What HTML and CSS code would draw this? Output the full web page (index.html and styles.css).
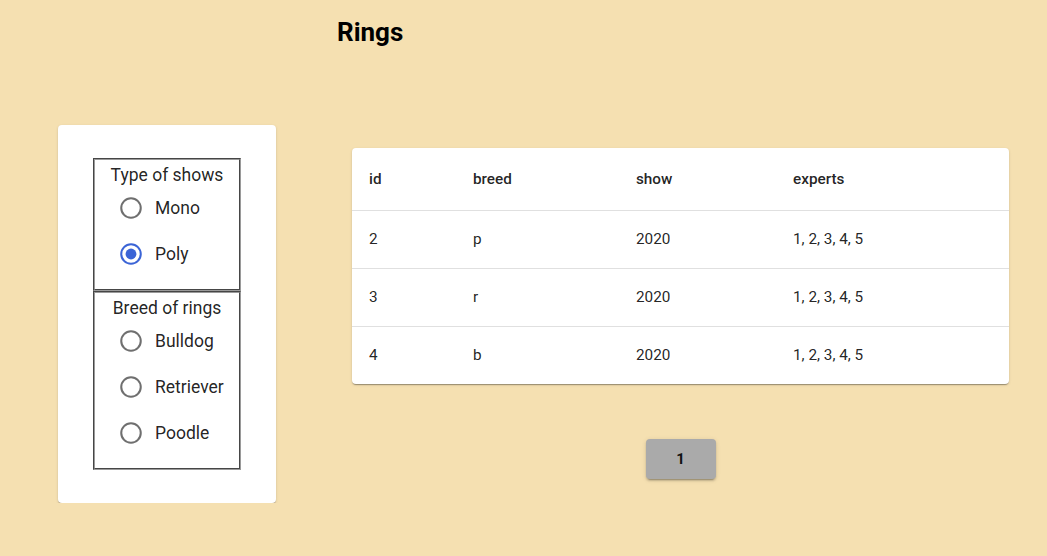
FILE: index.html
```html
<!DOCTYPE html>
<html lang="en">
<head>
	<meta charset="UTF-8">
	<title>Rings</title>
	<link rel="stylesheet" href="styles.css">
</head>
<body>
	<h2 class="title">Rings</h2>
	<div class="main">
		<aside class="filters">
			<div class="group">
				<div class="group-title">Type of shows</div>
				<div class="options">
					<label class="option">
						<svg class="radio" viewBox="0 0 24 24"><circle cx="12" cy="12" r="9" /></svg>
						<span>Mono</span>
					</label>
					<label class="option checked">
						<svg class="radio" viewBox="0 0 24 24"><circle cx="12" cy="12" r="9" /><circle class="dot" cx="12" cy="12" r="5" /></svg>
						<span>Poly</span>
					</label>
				</div>
			</div>
			<div class="group">
				<div class="group-title">Breed of rings</div>
				<div class="options">
					<label class="option">
						<svg class="radio" viewBox="0 0 24 24"><circle cx="12" cy="12" r="9" /></svg>
						<span>Bulldog</span>
					</label>
					<label class="option">
						<svg class="radio" viewBox="0 0 24 24"><circle cx="12" cy="12" r="9" /></svg>
						<span>Retriever</span>
					</label>
					<label class="option">
						<svg class="radio" viewBox="0 0 24 24"><circle cx="12" cy="12" r="9" /></svg>
						<span>Poodle</span>
					</label>
				</div>
			</div>
		</aside>

		<section class="rings">
			<div class="table-card">
				<table>
					<colgroup>
						<col class="c-id">
						<col class="c-breed">
						<col class="c-show">
						<col>
					</colgroup>
					<thead>
						<tr><th>id</th><th>breed</th><th>show</th><th>experts</th></tr>
					</thead>
					<tbody>
						<tr><td>2</td><td>p</td><td>2020</td><td>1, 2, 3, 4, 5</td></tr>
						<tr><td>3</td><td>r</td><td>2020</td><td>1, 2, 3, 4, 5</td></tr>
						<tr><td>4</td><td>b</td><td>2020</td><td>1, 2, 3, 4, 5</td></tr>
					</tbody>
				</table>
			</div>
			<div class="pages">
				<button class="page">1</button>
			</div>
		</section>
	</div>
</body>
</html>
```

FILE: styles.css
```css
body {
    margin: 0;
    background-color: #f5e0b1;
    font-family: Roboto, "Liberation Sans", Arial, sans-serif;
    color: rgba(0, 0, 0, 0.87);
}

.title {
    margin: 0;
    padding: 17px 0 0 337px;
    font-size: 26px;
    line-height: 30px;
    font-weight: 700;
    color: #000;
}

.main {
    display: flex;
    align-items: flex-start;
    padding: 78px 0 0 58px;
}

/* left panel */
.filters {
    width: 218px;
    box-sizing: border-box;
    padding: 33px 35px 33px;
    background: #fff;
    border-radius: 4px;
    box-shadow: 0 2px 1px -1px rgba(0,0,0,0.2), 0 1px 1px 0 rgba(0,0,0,0.14), 0 1px 3px 0 rgba(0,0,0,0.12);
}

.group {
    border: 2px groove #9a9a9a;
    padding: 5px 0 14px;
}

.group-title {
    text-align: center;
    font-size: 17.5px;
    line-height: 20px;
}

.options {
    display: flex;
    flex-direction: column;
    gap: 4px;
    margin-top: 2px;
}

.option {
    display: flex;
    align-items: center;
    height: 42px;
    padding-left: 23px;
    gap: 11px;
    font-size: 17.5px;
}

.radio {
    width: 26px;
    height: 26px;
    flex: none;
    fill: none;
    stroke: #6f6f6f;
    stroke-width: 1.9;
}

.checked .radio {
    stroke: #3b64d6;
}

.radio .dot {
    fill: #3b64d6;
    stroke: none;
}

/* table */
.rings {
    margin: 23px 0 0 76px;
    width: 657px;
}

.table-card {
    background: #fff;
    border-radius: 4px;
    overflow: hidden;
    box-shadow: 0 2px 1px -1px rgba(0,0,0,0.2), 0 1px 1px 0 rgba(0,0,0,0.14), 0 1px 3px 0 rgba(0,0,0,0.12);
}

table {
    width: 100%;
    border-collapse: collapse;
    table-layout: fixed;
    font-size: 15.3px;
}

.c-id { width: 104px; }
.c-breed { width: 163px; }
.c-show { width: 157px; }

th, td {
    text-align: left;
    padding: 0 0 0 17px;
    border-bottom: 1px solid #e0e0e0;
}

th {
    font-weight: 500;
    height: 62px;
}

td {
    height: 55px;
    padding-bottom: 2px;
}

tbody tr:last-child td {
    border-bottom: none;
}

.pages {
    display: flex;
    justify-content: center;
    margin-top: 55px;
}

.page {
    width: 70px;
    height: 40px;
    border: none;
    border-radius: 4px;
    background: #aaaaaa;
    font-family: Roboto, "Liberation Sans", Arial, sans-serif;
    font-size: 15px;
    font-weight: 700;
    color: #111;
    box-shadow: 0 3px 1px -2px rgba(0,0,0,0.2), 0 2px 2px 0 rgba(0,0,0,0.14), 0 1px 5px 0 rgba(0,0,0,0.12);
}
```
